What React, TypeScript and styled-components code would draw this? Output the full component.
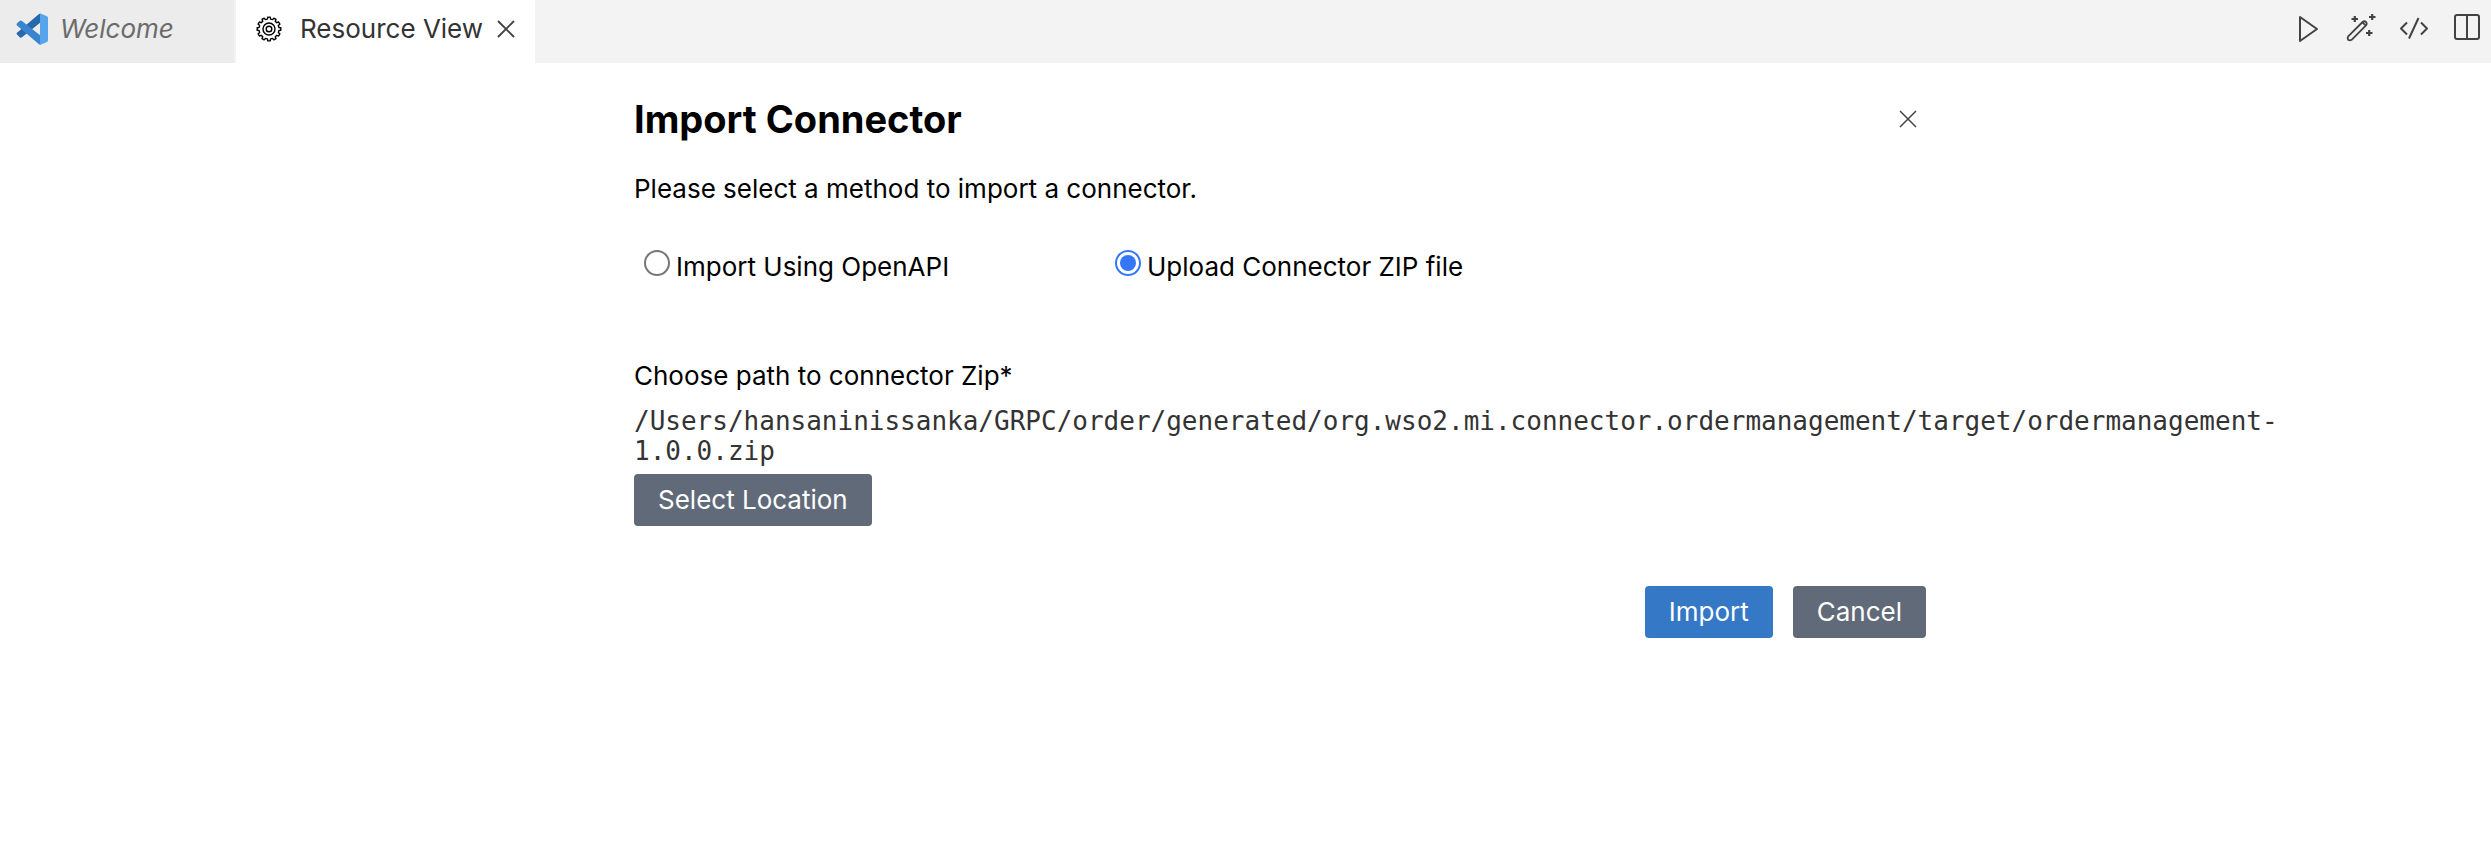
import React, { useState } from "react";
import styled, { createGlobalStyle } from "styled-components";

const GlobalStyle = createGlobalStyle`
  *, *::before, *::after { box-sizing: border-box; }
  body {
    margin: 0;
    background: #ffffff;
    color: #000000;
    font-family: Inter, "Liberation Sans", sans-serif;
    font-size: 26px;
    line-height: 32px;
  }
  button, input { font: inherit; }
`;

const TabBar = styled.header`
  display: flex;
  height: 63px;
  background: #f3f3f3;
`;

const Tab = styled.div<{ $active?: boolean }>`
  display: flex;
  align-items: center;
  padding: 0 20px 6px 16px;
  background: ${(p) => (p.$active ? "#ffffff" : "#ececec")};
  color: ${(p) => (p.$active ? "#333333" : "#6b6b6b")};
  font-style: ${(p) => (p.$active ? "normal" : "italic")};
  border-right: ${(p) => (p.$active ? "none" : "2px solid #f3f3f3")};
  min-width: ${(p) => (p.$active ? 299 : 236)}px;
`;

const TabButton = styled.button<{ $inset?: boolean }>`
  display: flex;
  align-items: center;
  gap: ${(p) => (p.$inset ? 18 : 12)}px;
  padding: 0 0 0 ${(p) => (p.$inset ? 4 : 0)}px;
  border: 0;
  background: none;
  color: inherit;
  font-style: inherit;
  white-space: nowrap;
`;

const IconButton = styled.button`
  display: flex;
  padding: 0;
  border: 0;
  background: none;
  color: #424242;
`;

const TabClose = styled(IconButton)`
  margin-left: auto;
`;

const Actions = styled.nav`
  display: flex;
  align-items: center;
  gap: 21px;
  margin-left: auto;
  padding: 0 8px 8px 0;
`;

const Page = styled.main`
  display: grid;
  grid-template-columns: minmax(0, 634fr) minmax(0, 1292fr) minmax(0, 565fr);
  padding-top: 36px;
`;

const Form = styled.form`
  grid-column: 2;
  display: flex;
  flex-direction: column;
`;

const TitleRow = styled.div`
  display: flex;
  align-items: center;
  justify-content: space-between;
  padding-right: 9px;
`;

const Title = styled.h1`
  margin: 0;
  font-size: 38px;
  line-height: 40px;
  font-weight: 700;
`;

const Intro = styled.p`
  margin: 34px 0 0;
`;

const Options = styled.fieldset`
  display: flex;
  margin: 44px 0 0;
  padding: 0 0 0 10px;
  border: 0;
`;

const Option = styled.label`
  display: flex;
  align-items: flex-start;
  gap: 6px;
  width: 471px;
  white-space: nowrap;
`;

const OptionText = styled.span`
  padding-top: 2px;
`;

const Radio = styled.input`
  appearance: none;
  display: grid;
  place-items: center;
  width: 26px;
  height: 26px;
  margin: 1px 0 0;
  border: 2px solid #767676;
  border-radius: 50%;
  background: #ffffff;
  &:checked { border-color: #3478f6; }
  &:checked::before {
    content: "";
    width: 16px;
    height: 16px;
    border-radius: 50%;
    background: #3478f6;
  }
`;

const Field = styled.section`
  display: flex;
  flex-direction: column;
  align-items: flex-start;
  margin-top: 77px;
`;

const FieldLabel = styled.span`
  margin-bottom: 14px;
`;

const FilePath = styled.code`
  width: 128%;
  margin-bottom: 8px;
  color: #333333;
  font-family: "DejaVu Sans Mono", "Liberation Mono", monospace;
  font-size: 26px;
  line-height: 30px;
`;

const Button = styled.button<{ $primary?: boolean }>`
  height: 52px;
  padding: 0 24px;
  border: 0;
  border-radius: 4px;
  background: ${(p) => (p.$primary ? "#3478c6" : "#616a79")};
  color: #ffffff;
  white-space: nowrap;
`;

const Footer = styled.footer`
  display: flex;
  justify-content: flex-end;
  gap: 20px;
  margin-top: 60px;
`;

const VsCodeLogo = () => (
  <svg width="32" height="32" viewBox="0 0 32 32" aria-hidden="true">
    <path d="M1 21.5 4 24.5Q5 25 6 24.3L25 9V1.2Q23.8.1 22.4 1.4L.7 20Q.2 20.8 1 21.5Z" fill="#2869ad" />
    <path d="M1 10.3 4 7.8Q5 7.2 6 8L25 23V31.3Q23.5 32 22.4 30.7L.7 12.2Q.2 11.2 1 10.3Z" fill="#3984cf" />
    <path d="M24 .3 31 3.2Q32 3.8 32 5V27Q32 28.5 31 29L24 32Q23.8 31.5 24 30.4V1.6Q23.8.9 24 .3Z" fill="#55a5ed" />
  </svg>
);

const gearPath = Array.from({ length: 12 }, (_, i) => {
  const point = (offset: number, radius: number) => {
    const angle = ((i * 30 + offset) * Math.PI) / 180;
    return `${(13 + radius * Math.sin(angle)).toFixed(2)} ${(13 - radius * Math.cos(angle)).toFixed(2)}`;
  };
  return `${i === 0 ? "M" : "L"}${point(-9, 10)} L${point(-6, 11.9)} L${point(6, 11.9)} L${point(9, 10)}`;
}).join(" ") + "Z";

const GearIcon = () => (
  <svg width="26" height="26" viewBox="0 0 26 26" fill="none" stroke="#000000" strokeWidth="1.4" strokeLinejoin="round" aria-hidden="true">
    <path d={gearPath} />
    <circle cx="13" cy="13" r="6" />
    <circle cx="13" cy="13" r="2.8" />
  </svg>
);

const CloseIcon = ({ thin }: { thin?: boolean }) => (
  <svg width="18" height="18" viewBox="0 0 18 18" stroke="currentColor" strokeWidth={thin ? 1.5 : 1.9} aria-hidden="true">
    <path d="M1 1 17 17M17 1 1 17" />
  </svg>
);

const ActionIcon = ({ children }: { children: React.ReactNode }) => (
  <svg width="32" height="32" viewBox="0 0 32 32" fill="none" stroke="currentColor" strokeWidth="2" strokeLinejoin="round" aria-hidden="true">
    {children}
  </svg>
);

export default function App() {
  const [method, setMethod] = useState("zip");
  return (
    <>
      <GlobalStyle />
      <TabBar>
        <Tab>
          <TabButton type="button"><VsCodeLogo />Welcome</TabButton>
        </Tab>
        <Tab $active>
          <TabButton type="button" $inset><GearIcon />Resource View</TabButton>
          <TabClose type="button" aria-label="Close tab"><CloseIcon /></TabClose>
        </Tab>
        <Actions aria-label="Editor actions">
          <IconButton type="button" aria-label="Run">
            <ActionIcon><path d="M8 5V29L25 17Z" /></ActionIcon>
          </IconButton>
          <IconButton type="button" aria-label="Generate">
            <ActionIcon>
              <path d="M3.2 24.4 17.6 10Q19.4 8.6 21 10 22.4 11.6 21 13.4L6.6 27.8Q4.8 29 3.2 27.8 2 26 3.2 24.4ZM17.4 10.4 20.8 13.6" strokeWidth="1.8" />
              <path d="M6.5 7H13M9.8 4V10M24 5H30.5M27.2 2V8M21 21H27.5M24.2 18V24" strokeWidth="2.2" />
            </ActionIcon>
          </IconButton>
          <IconButton type="button" aria-label="Show source">
            <ActionIcon><path d="M9 10.5 3 16.5 9 22.5M23 10.5 29 16.5 23 22.5M20.5 6 11 26.5" /></ActionIcon>
          </IconButton>
          <IconButton type="button" aria-label="Split editor">
            <ActionIcon><rect x="4" y="3" width="24" height="24" rx="2" /><path d="M16 3V27" /></ActionIcon>
          </IconButton>
        </Actions>
      </TabBar>
      <Page>
        <Form onSubmit={(e) => e.preventDefault()}>
          <TitleRow>
            <Title>Import Connector</Title>
            <IconButton type="button" aria-label="Close"><CloseIcon thin /></IconButton>
          </TitleRow>
          <Intro>Please select a method to import a connector.</Intro>
          <Options aria-label="Import method">
            <Option>
              <Radio type="radio" name="method" checked={method === "openapi"} onChange={() => setMethod("openapi")} />
              <OptionText>Import Using OpenAPI</OptionText>
            </Option>
            <Option>
              <Radio type="radio" name="method" checked={method === "zip"} onChange={() => setMethod("zip")} />
              <OptionText>Upload Connector ZIP file</OptionText>
            </Option>
          </Options>
          <Field>
            <FieldLabel>Choose path to connector Zip*</FieldLabel>
            <FilePath>/Users/hansaninissanka/GRPC/order/generated/org.wso2.mi.connector.ordermanagement/target/ordermanagement-1.0.0.zip</FilePath>
            <Button type="button">Select Location</Button>
          </Field>
          <Footer>
            <Button type="submit" $primary>Import</Button>
            <Button type="button">Cancel</Button>
          </Footer>
        </Form>
      </Page>
    </>
  );
}
